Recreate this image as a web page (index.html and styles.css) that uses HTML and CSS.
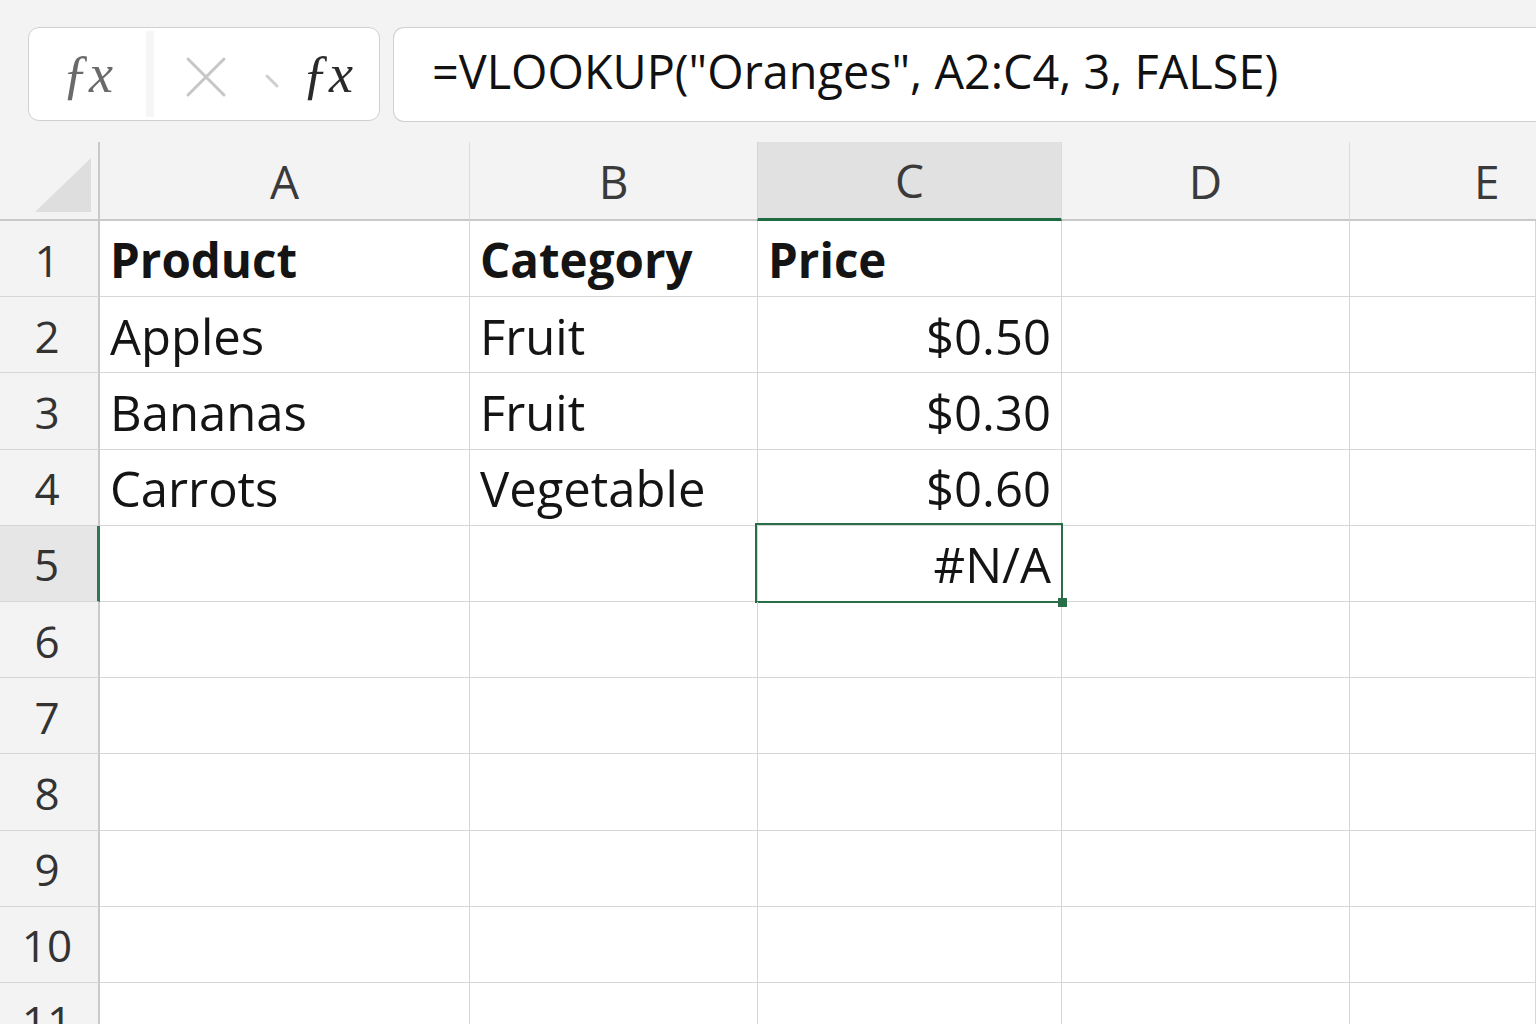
FILE: index.html
```html
<!DOCTYPE html>
<html>
<head>
<meta charset="utf-8">
<link rel="stylesheet" href="styles.css">
</head>
<body>
<div class="toolbar">
  <div class="fbox">
    <div class="fx-name"><span class="fx gray">ƒx</span></div>
    <div class="sep"></div>
    <div class="fx-actions">
      <svg class="cancel" width="44" height="44" viewBox="0 0 44 44"><path d="M4 4 L40 40 M40 4 L4 40" stroke="#c6c6c6" stroke-width="3" fill="none" stroke-linecap="round"/></svg>
      <svg class="tick" width="18" height="18" viewBox="0 0 18 18"><path d="M3 4 L13 14" stroke="#cfcfcf" stroke-width="3" stroke-linecap="round"/></svg>
      <span class="fx dark">ƒx</span>
    </div>
  </div>
  <div class="formula">=VLOOKUP("Oranges", A2:C4, 3, FALSE)</div>
</div>
<div class="sheet">
  <div class="ch corner"><div class="tri"></div></div>
  <div class="ch">A</div>
  <div class="ch">B</div>
  <div class="ch sel">C</div>
  <div class="ch">D</div>
  <div class="ch last">E</div>

  <div class="rh">1</div><div class="c b">Product</div><div class="c b">Category</div><div class="c b">Price</div><div class="c"></div><div class="c"></div>
  <div class="rh">2</div><div class="c">Apples</div><div class="c">Fruit</div><div class="c r">$0.50</div><div class="c"></div><div class="c"></div>
  <div class="rh">3</div><div class="c">Bananas</div><div class="c">Fruit</div><div class="c r">$0.30</div><div class="c"></div><div class="c"></div>
  <div class="rh">4</div><div class="c">Carrots</div><div class="c">Vegetable</div><div class="c r">$0.60</div><div class="c"></div><div class="c"></div>
  <div class="rh sel">5</div><div class="c"></div><div class="c"></div><div class="c r active">#N/A<span class="handle"></span></div><div class="c"></div><div class="c"></div>
  <div class="rh">6</div><div class="c"></div><div class="c"></div><div class="c"></div><div class="c"></div><div class="c"></div>
  <div class="rh">7</div><div class="c"></div><div class="c"></div><div class="c"></div><div class="c"></div><div class="c"></div>
  <div class="rh">8</div><div class="c"></div><div class="c"></div><div class="c"></div><div class="c"></div><div class="c"></div>
  <div class="rh">9</div><div class="c"></div><div class="c"></div><div class="c"></div><div class="c"></div><div class="c"></div>
  <div class="rh">10</div><div class="c"></div><div class="c"></div><div class="c"></div><div class="c"></div><div class="c"></div>
  <div class="rh">11</div><div class="c"></div><div class="c"></div><div class="c"></div><div class="c"></div><div class="c"></div>
</div>
</body>
</html>
```
FILE: styles.css
```css
html, body {
  margin: 0;
  padding: 0;
  background: #f3f3f3;
  overflow: hidden;
  width: 1536px;
  height: 1024px;
}
body {
  font-family: "Open Sans", "Noto Sans", sans-serif;
  color: #111;
}
.toolbar {
  height: 142px;
  box-sizing: border-box;
  padding: 27px 0 0 28px;
  display: flex;
  gap: 13px;
  align-items: flex-start;
}
.fbox {
  width: 352px;
  height: 94px;
  box-sizing: border-box;
  background: #fff;
  border: 1.5px solid #d0d0d0;
  border-radius: 11px;
  display: flex;
  overflow: hidden;
}
.fx-name {
  width: 117px;
  display: flex;
  align-items: center;
  justify-content: center;
}
.sep {
  width: 8px;
  background: #f6f6f6;
  margin: 3px 0;
}
.fx-actions {
  flex: 1;
  display: flex;
  align-items: center;
  padding-left: 30px;
}
.cancel { margin-top: 6px; }
.tick { margin-left: 36px; margin-top: 14px; }
.fx {
  font-family: "Liberation Serif", "DejaVu Serif", serif;
  font-style: italic;
  font-size: 54px;
  line-height: 1;
}
.fx.gray { color: #6a6a6a; }
.fx.dark { color: #2a2a2a; margin-left: 20px; }
.formula {
  flex: 1;
  height: 95px;
  box-sizing: border-box;
  background: #fff;
  border: 1.5px solid #d0d0d0;
  border-right: none;
  border-radius: 11px 0 0 11px;
  font-size: 46.8px;
  line-height: 86px;
  padding-left: 38px;
  color: #111;
  white-space: nowrap;
}
.sheet {
  display: grid;
  grid-template-columns: 100px 370px 288px 304px 288px 186px;
  grid-template-rows: 79px repeat(11, 76.2px);
  background: #fff;
}
.ch {
  background: #f3f3f3;
  border-right: 1px solid #dcdcdc;
  border-bottom: 2px solid #c9c9c9;
  display: flex;
  align-items: center;
  justify-content: center;
  font-size: 46px;
  color: #3a3a3a;
  padding-bottom: 0;
  box-sizing: border-box;
}
.ch.last { border-right: none; justify-content: flex-start; padding-left: 124px; }
.ch.corner {
  border-right: 2px solid #c9c9c9;
  align-items: flex-start;
  justify-content: flex-start;
  padding: 16px 0 0 35px;
}
.tri {
  width: 0;
  height: 0;
  border-left: 56px solid transparent;
  border-bottom: 54px solid #dedede;
}
.ch.sel {
  background: #e1e1e1;
  border-left: 1px solid #d2d2d2;
  border-bottom: 3px solid #1e6a41;
  margin-left: -1px;
}
.rh {
  background: #f3f3f3;
  border-right: 2px solid #c9c9c9;
  border-bottom: 1px solid #d6d6d6;
  box-sizing: border-box;
  display: flex;
  align-items: center;
  justify-content: center;
  font-size: 44px;
  color: #333;
  padding-right: 4px;
  padding-top: 2px;
}
.rh.sel {
  background: #e6e6e6;
  border-right: 3px solid #2b7a4f;
}
.c {
  border-right: 1px solid #d6d6d6;
  border-bottom: 1px solid #d6d6d6;
  box-sizing: border-box;
  display: flex;
  align-items: center;
  padding: 2px 10px 0 10px;
  font-size: 49px;
  color: #141414;
  white-space: nowrap;
  position: relative;
}
.c.b { font-weight: 700; font-size: 47.5px; }
.c.r { justify-content: flex-end; }
.c.active::after {
  content: "";
  position: absolute;
  left: -3px;
  top: -3px;
  right: -2px;
  bottom: -2px;
  border: 2.5px solid #2a6e48;
  pointer-events: none;
}
.handle {
  position: absolute;
  right: -6px;
  bottom: -6px;
  width: 9px;
  height: 9px;
  background: #2a6e48;
  z-index: 2;
}
```
